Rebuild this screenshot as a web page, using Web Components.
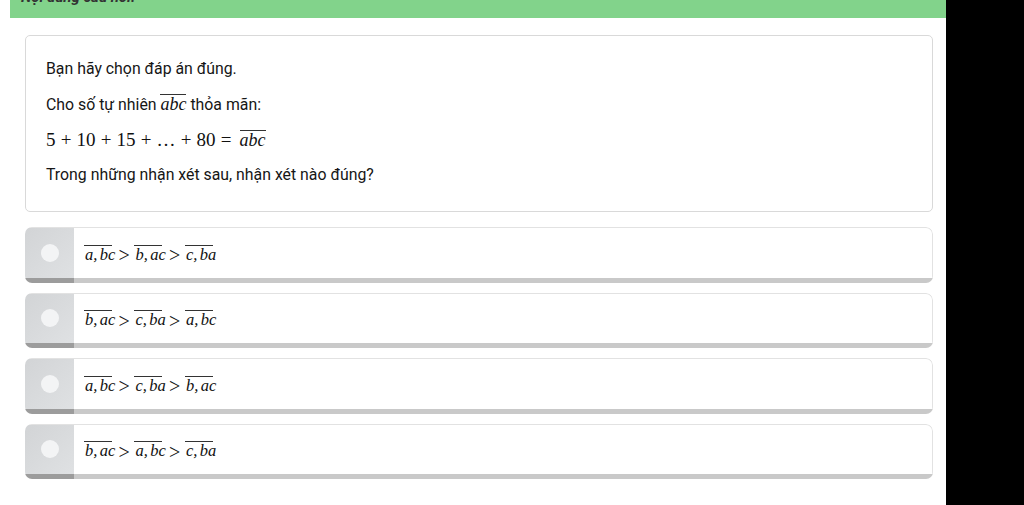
<!DOCTYPE html>
<html lang="vi">
<head>
<meta charset="utf-8">
<title>Câu hỏi</title>
<style>
  html, body { margin: 0; height: 100%; background: #fff; overflow: hidden; }
  body { font-family: Roboto, "Noto Sans", sans-serif; color: #161616; }
</style>
</head>
<body>
<quiz-page>
  <quiz-header>Nội dung câu hỏi:</quiz-header>
  <question-card>
    <p>Bạn hãy chọn đáp án đúng.</p>
    <p>Cho số tự nhiên <math-over>abc</math-over> thỏa mãn:</p>
    <p><math-expr>5 + 10 + 15 + … + 80 = </math-expr><math-over>abc</math-over></p>
    <p>Trong những nhận xét sau, nhận xét nào đúng?</p>
  </question-card>
  <answer-option order="a, bc|b, ac|c, ba"></answer-option>
  <answer-option order="b, ac|c, ba|a, bc"></answer-option>
  <answer-option order="a, bc|c, ba|b, ac"></answer-option>
  <answer-option order="b, ac|a, bc|c, ba"></answer-option>
</quiz-page>

<script>
const MATH_FONT = `"Liberation Serif", "DejaVu Serif", serif`;

class QuizPage extends HTMLElement {
  constructor() {
    super();
    this.attachShadow({mode: 'open'});
    this.shadowRoot.innerHTML = `
      <style>
        :host { display: flex; height: 505px; background: #000; }
        .sheet {
          width: 946px;
          height: 100%;
          box-sizing: border-box;
          background: #fff;
          padding-left: 10px;
          display: flex;
          flex-direction: column;
        }
        .content {
          padding: 17px 13px 0 15px;
          display: flex;
          flex-direction: column;
        }
      </style>
      <div class="sheet">
        <slot name="top"></slot>
        <div class="content"><slot></slot></div>
      </div>
    `;
  }
}

class QuizHeader extends HTMLElement {
  constructor() {
    super();
    this.setAttribute('slot', 'top');
    this.attachShadow({mode: 'open'});
    this.shadowRoot.innerHTML = `
      <style>
        :host {
          display: flex;
          align-items: flex-end;
          height: 18px;
          padding: 0 0 13px 11px;
          box-sizing: border-box;
          background: #82d38b;
          font-size: 15px;
          line-height: 16px;
          font-weight: 700;
          font-style: italic;
          color: #333;
        }
      </style>
      <slot></slot>
    `;
  }
}

class QuestionCard extends HTMLElement {
  constructor() {
    super();
    this.attachShadow({mode: 'open'});
    this.shadowRoot.innerHTML = `
      <style>
        :host {
          display: block;
          height: 177px;
          box-sizing: border-box;
          padding: 15px 20px 0;
          border: 1px solid #d9d9d9;
          border-radius: 5px;
          background: #fff;
          font-size: 15.85px;
          line-height: 35.3px;
        }
        ::slotted(p) { margin: 0; height: 35.3px; white-space: nowrap; }
        ::slotted(p:nth-child(2)) { padding-top: 1px; height: 34.3px; }
      </style>
      <slot></slot>
    `;
  }
}

// letters under a vinculum, e.g. abc or a,bc
class MathOver extends HTMLElement {
  constructor() {
    super();
    this.attachShadow({mode: 'open'});
    this.shadowRoot.innerHTML = `
      <style>
        :host {
          display: inline-block;
          font-family: ${MATH_FONT};
          font-style: italic;
          font-size: var(--math-size, 18px);
          word-spacing: var(--math-comma, 0);
          width: var(--math-width, auto);
          line-height: 18px;
          white-space: nowrap;
          color: #111;
        }
        .bar {
          display: block;
          border-top: 1px solid #333;
          margin-top: 3px;
        }
        .text { padding-left: var(--math-inset, 0); }
      </style>
      <span class="bar"><span class="text"><slot></slot></span></span>
    `;
  }
}

class MathExpr extends HTMLElement {
  constructor() {
    super();
    this.attachShadow({mode: 'open'});
    this.shadowRoot.innerHTML = `
      <style>
        :host {
          font-family: ${MATH_FONT};
          font-size: 19px;
          color: #111;
          word-spacing: 0.4px;
          margin-right: 3px;
        }
      </style>
      <slot></slot>
    `;
  }
}

class AnswerOption extends HTMLElement {
  constructor() {
    super();
    this.attachShadow({mode: 'open'});
    const terms = (this.getAttribute('order') || '').split('|');
    const expr = terms.map((t) => `<math-over>${t}</math-over>`).join('<span class="gt">&gt;</span>');
    this.shadowRoot.innerHTML = `
      <style>
        :host {
          display: block;
          height: 55.5px;
          margin-top: 10px;
        }
        :host(:first-of-type) { margin-top: 15px; }
        .box {
          display: flex;
          flex-direction: column;
          height: 100%;
          border-radius: 7px;
          overflow: hidden;
          background: #fff;
        }
        .row {
          flex: 1;
          display: flex;
          min-height: 0;
          border-top: 1px solid #e2e2e2;
          border-right: 1px solid #e2e2e2;
          border-top-right-radius: 7px;
        }
        .side {
          width: 49px;
          display: flex;
          align-items: center;
          justify-content: center;
          background: linear-gradient(135deg, #d2d4d6, #dfe1e3);
        }
        .dot {
          width: 18px;
          height: 18px;
          border-radius: 50%;
          background: #f3f4f5;
        }
        .expr {
          display: flex;
          align-items: center;
          padding-left: 10px;
          white-space: nowrap;
          --math-size: 16.5px;
          --math-comma: -1.8px;
          --math-width: 28px;
          --math-inset: 1px;
        }
        .gt {
          font-family: ${MATH_FONT};
          font-size: 20px;
          line-height: 18px;
          color: #111;
          margin: 5px 4.7px 0 6.5px;
        }
        .foot {
          height: 5px;
          background: linear-gradient(to right, #9c9c9c 49px, #c9c9c9 49px);
        }
      </style>
      <div class="box">
        <div class="row">
          <div class="side"><span class="dot"></span></div>
          <div class="expr">${expr}</div>
        </div>
        <div class="foot"></div>
      </div>
    `;
  }
}

customElements.define('quiz-page', QuizPage);
customElements.define('quiz-header', QuizHeader);
customElements.define('question-card', QuestionCard);
customElements.define('math-over', MathOver);
customElements.define('math-expr', MathExpr);
customElements.define('answer-option', AnswerOption);
</script>
</body>
</html>
